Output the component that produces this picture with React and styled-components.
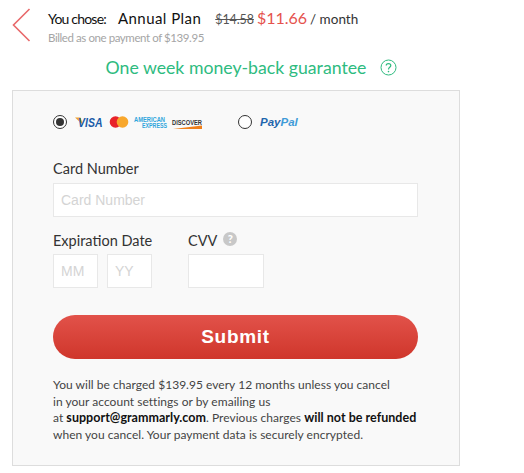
import React from "react";
import styled, { createGlobalStyle } from "styled-components";

const GlobalStyle = createGlobalStyle`
	html, body {
		margin: 0;
		padding: 0;
		background: #fff;
	}
	* {
		box-sizing: border-box;
	}
`;

const Page = styled.div`
	width: 524px;
	height: 473px;
	overflow: hidden;
	font-family: Lato, sans-serif;
	color: #222;
`;

const Summary = styled.div`
	display: flex;
	height: 52px;
	padding: 8px 0 0 12px;
`;

const BackArrow = styled.svg`
	width: 19px;
	height: 34px;
	margin-right: 17px;
	flex: none;
`;

const Plan = styled.div`
	display: flex;
	flex-direction: column;
`;

const PlanRow = styled.div`
	display: flex;
	align-items: baseline;
	height: 20px;
	white-space: nowrap;
`;

const Chose = styled.span`
	font-size: 14px;
	letter-spacing: -0.8px;
	color: #111;
	margin-right: 12px;
`;

const PlanName = styled.span`
	font-size: 15px;
	letter-spacing: 0.45px;
	color: #111;
	margin-right: 14px;
`;

const OldPrice = styled.span`
	font-size: 12.5px;
	letter-spacing: -0.1px;
	color: #555;
	text-decoration: line-through;
	margin-right: 3px;
`;

const Price = styled.span`
	font-size: 16px;
	color: #e5524d;
	margin-right: 3px;
`;

const Period = styled.span`
	font-size: 13.5px;
	color: #333;
`;

const Billed = styled.div`
	font-size: 11.5px;
	letter-spacing: -0.42px;
	color: #a5a5a5;
	margin-top: 3px;
`;

const Guarantee = styled.div`
	display: flex;
	justify-content: center;
	align-items: center;
	height: 30px;
	padding-right: 21px;
	font-size: 17.7px;
	color: #2ebb7f;
`;

const HelpIcon = styled.svg`
	width: 17px;
	height: 17px;
	margin-left: 14px;
`;

const Panel = styled.div`
	width: 448px;
	height: 376px;
	margin: 8px 0 0 12px;
	padding: 22px 40px 0;
	background: #f9f9f9;
	border: 1px solid #ddd;
`;

const Methods = styled.div`
	display: flex;
	align-items: center;
	height: 18px;
`;

const Radio = styled.span`
	width: 14px;
	height: 14px;
	flex: none;
	border: 1px solid #333;
	border-radius: 50%;
	background: #fff;
	display: flex;
	align-items: center;
	justify-content: center;
	&::after {
		content: "";
		display: ${(p) => (p.$checked ? "block" : "none")};
		width: 8px;
		height: 8px;
		border-radius: 50%;
		background: #333;
	}
`;

const CardLogos = styled.svg`
	width: 128px;
	height: 16px;
	margin-left: 8px;
	margin-right: 35px;
	flex: none;
	overflow: visible;
`;

const PayPal = styled.span`
	margin-left: 8px;
	font-family: "Liberation Sans", sans-serif;
	font-size: 11.5px;
	font-weight: 700;
	font-style: italic;
	color: #1f66ad;
	& > span {
		color: #3f9bd8;
	}
`;

const FieldLabel = styled.label`
	display: block;
	font-size: 14.5px;
	line-height: 18px;
	color: #333;
`;

const CardField = styled.div`
	margin-top: 29px;
`;

const TextInput = styled.input`
	display: block;
	height: 34px;
	width: ${(p) => p.$width}px;
	margin-top: ${(p) => p.$top || 0}px;
	padding: 0 7px;
	font-family: "Liberation Sans", sans-serif;
	font-size: 14px;
	background: #fff;
	border: 1px solid #e8e8e8;
	border-radius: 0;
	outline: none;
	&::placeholder {
		color: #d4d4d4;
		opacity: 1;
	}
`;

const ExpiryRow = styled.div`
	display: flex;
	margin-top: 15px;
`;

const ExpiryCol = styled.div`
	width: 135px;
`;

const InputPair = styled.div`
	display: flex;
	gap: 9px;
	margin-top: 4px;
`;

const CvvLabel = styled(FieldLabel)`
	display: flex;
	align-items: center;
	gap: 6px;
`;

const CvvHint = styled.span`
	width: 14px;
	height: 14px;
	margin-top: -5px;
	border-radius: 50%;
	background: #c8c8c8;
	color: #fff;
	font-size: 11px;
	font-weight: 900;
	line-height: 14px;
	text-align: center;
`;

const SubmitButton = styled.button`
	display: block;
	width: 365px;
	height: 44px;
	margin-top: 27px;
	border: 0;
	border-radius: 22px;
	background: linear-gradient(#e2524a, #cf362b);
	color: #fff;
	font-family: "Liberation Sans", sans-serif;
	font-size: 19px;
	font-weight: 700;
	letter-spacing: 0.7px;
`;

const Terms = styled.p`
	margin: 18px 0 0;
	font-size: 12px;
	letter-spacing: 0.03px;
	line-height: 16.7px;
	color: #444;
	white-space: nowrap;
	& b {
		color: #111;
		font-size: 12.5px;
		font-weight: 700;
	}
`;

const App = () => {
	return (
		<Page>
			<GlobalStyle />
			<Summary>
				<BackArrow viewBox="0 0 19 34">
					<path d="M17.5 1 L1.5 17 L17.5 33" fill="none" stroke="#e8686a" strokeWidth="1.6" />
				</BackArrow>
				<Plan>
					<PlanRow>
						<Chose>You chose:</Chose>
						<PlanName>Annual Plan</PlanName>
						<OldPrice>$14.58</OldPrice>
						<Price>$11.66</Price>
						<Period>/ month</Period>
					</PlanRow>
					<Billed>Billed as one payment of $139.95</Billed>
				</Plan>
			</Summary>
			<Guarantee>
				One week money-back guarantee
				<HelpIcon viewBox="0 0 17 17">
					<circle cx="8.5" cy="8.5" r="7.5" fill="none" stroke="#2ebb7f" strokeWidth="1" />
					<path d="M6.2 6.6 C6.2 3.9 10.8 3.9 10.8 6.6 C10.8 8.4 8.5 8.3 8.5 10.4" fill="none" stroke="#2ebb7f" strokeWidth="1.2" />
					<circle cx="8.5" cy="12.6" r="0.8" fill="#2ebb7f" />
				</HelpIcon>
			</Guarantee>
			<Panel>
				<Methods>
					<Radio $checked />
					<CardLogos viewBox="0 0 128 16">
						<path d="M0 3.5 L5.5 3.5 L8 11 Z" fill="#f0a32f" />
						<text x="3" y="13" fontFamily="Liberation Sans" fontSize="13" fontWeight="700" fontStyle="italic" fill="#1a5ca8" textLength="24.5" lengthAdjust="spacingAndGlyphs">VISA</text>
						<circle cx="40.5" cy="8" r="5.8" fill="#e8232a" />
						<circle cx="47.5" cy="8" r="5.8" fill="#f8a72c" />
						<text x="59" y="7.5" fontFamily="Liberation Sans" fontSize="7" fontWeight="700" fill="#2fa5dc" textLength="31" lengthAdjust="spacingAndGlyphs">AMERICAN</text>
						<text x="67" y="14" fontFamily="Liberation Sans" fontSize="7" fontWeight="700" fill="#2fa5dc" textLength="25" lengthAdjust="spacingAndGlyphs">EXPRESS</text>
						<text x="97" y="10.5" fontFamily="Liberation Sans" fontSize="7.5" fontWeight="700" fill="#333" textLength="30" lengthAdjust="spacingAndGlyphs">DISCOVER</text>
						<path d="M98 15 L127 11.5 L127 15 Z" fill="#ef7f1a" />
					</CardLogos>
					<Radio />
					<PayPal>Pay<span>Pal</span></PayPal>
				</Methods>
				<CardField>
					<FieldLabel>Card Number</FieldLabel>
					<TextInput placeholder="Card Number" $width={365} $top={5} />
				</CardField>
				<ExpiryRow>
					<ExpiryCol>
						<FieldLabel>Expiration Date</FieldLabel>
						<InputPair>
							<TextInput placeholder="MM" $width={45} />
							<TextInput placeholder="YY" $width={45} />
						</InputPair>
					</ExpiryCol>
					<div>
						<CvvLabel>CVV <CvvHint>?</CvvHint></CvvLabel>
						<InputPair>
							<TextInput $width={76} />
						</InputPair>
					</div>
				</ExpiryRow>
				<SubmitButton>Submit</SubmitButton>
				<Terms>
					You will be charged $139.95 every 12 months unless you cancel
					<br />
					in your account settings or by emailing us
					<br />
					at <b>support@grammarly.com</b>. Previous charges <b>will not be refunded</b>
					<br />
					when you cancel. Your payment data is securely encrypted.
				</Terms>
			</Panel>
		</Page>
	);
};

export default App;
